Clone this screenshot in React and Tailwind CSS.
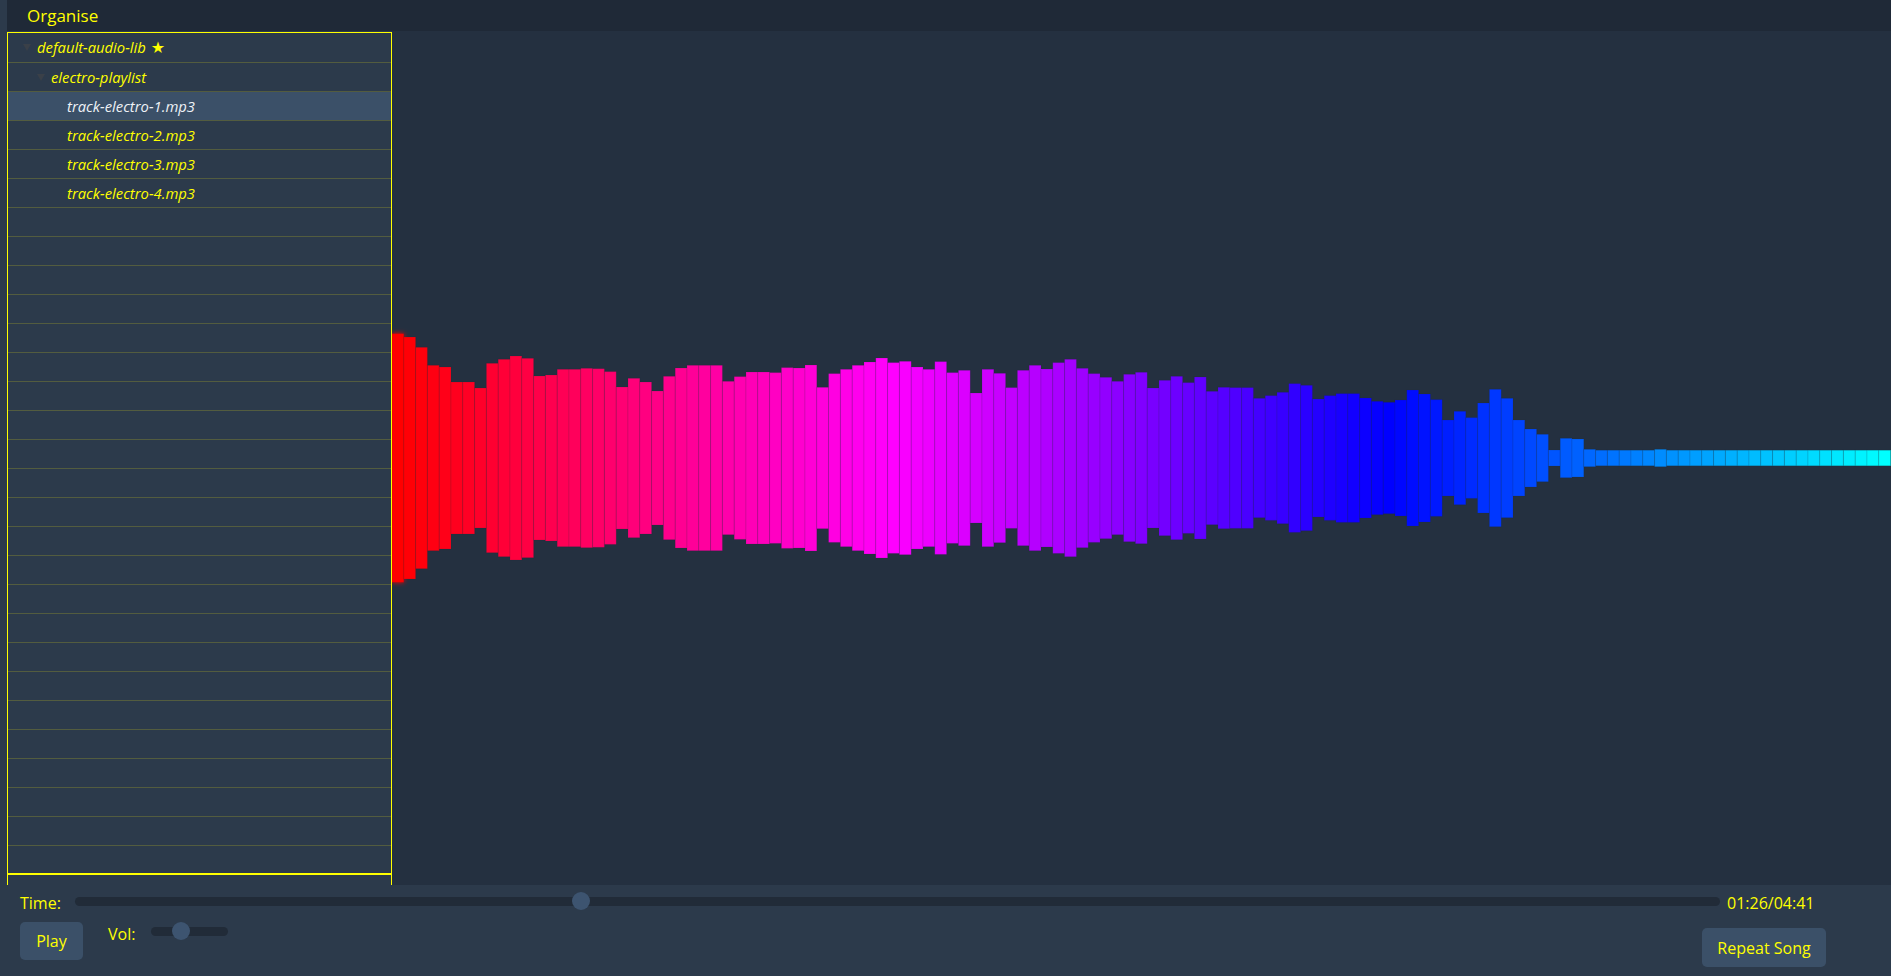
import React from "react";

const H = [
  124.4, 121, 110.7, 92.7, 91, 76, 76, 70, 94.7, 98.7, 102, 99.7, 82, 83, 88.7, 88.7,
  89.7, 89.3, 86.4, 71, 79.7, 76, 67, 81.7, 90, 92.7, 92.7, 92.7, 76.7, 81.4, 86, 86,
  85.4, 90.4, 90, 93, 70.7, 84.4, 88.7, 92.7, 96, 100, 95.4, 96.7, 91, 88.7, 96.4, 85.4,
  87.7, 65, 88.7, 84.7, 70.4, 87.7, 92.7, 89, 95.4, 98.7, 89.7, 84.4, 80.7, 76.7, 83.7, 85.7,
  70, 77.7, 81.7, 75.4, 81, 66.7, 70.7, 70.4, 70.4, 59.7, 62.4, 65.7, 74.4, 72.7, 59, 62.4,
  64.4, 64.4, 60, 56.7, 55.7, 58, 68, 64, 58.4, 38, 46.7, 40.4, 55, 68.7, 59.7, 38,
  29, 23.7, 8, 19.7, 19, 8.7,
];
const BARS = [];
for (let i = 0; i < 128; i++) {
  let h = i < H.length ? H[i] : i === 107 ? 8.7 : 7.8;
  BARS.push(h);
}
const BW = 11.8;
const CY = 427;

function Waveform() {
  return (
    <svg
      className="block w-full h-full"
      viewBox="0 0 1499 854"
      preserveAspectRatio="none"
    >
      <defs>
        <filter id="glow" x="-50%" y="-10%" width="200%" height="120%">
          <feGaussianBlur stdDeviation="2.5" />
        </filter>
      </defs>
      <rect
        x={0}
        y={CY - BARS[0]}
        width={BW}
        height={BARS[0] * 2}
        fill="#ff0000"
        filter="url(#glow)"
      />
      {BARS.map((h, i) => {
        const hue = 360 - (i * 60) / 42;
        return (
          <rect
            key={i}
            x={i * BW}
            y={CY - h}
            width={BW}
            height={h * 2}
            fill={`hsl(${hue}, 100%, 50%)`}
            stroke="rgba(30,40,60,0.14)"
            strokeWidth="1"
          />
        );
      })}
    </svg>
  );
}

function Caret() {
  return (
    <svg width="8" height="7" viewBox="0 0 8 7" className="block">
      <path d="M0 0 L8 0 L4 7 Z" fill="#3a4048" />
    </svg>
  );
}

const ROWS = [
  { level: 0, caret: true, text: "default-audio-lib", star: true },
  { level: 1, caret: true, text: "electro-playlist" },
  { level: 2, text: "track-electro-1.mp3", selected: true },
  { level: 2, text: "track-electro-2.mp3" },
  { level: 2, text: "track-electro-3.mp3" },
  { level: 2, text: "track-electro-4.mp3" },
];
while (ROWS.length < 29) ROWS.push({ empty: true });

const padByLevel = ["pl-[15px]", "pl-[29px]", "pl-[45px]"];

function Row({ row, index }) {
  const first = index === 0;
  const last = index === 28;
  const h = first ? "h-[30px]" : "h-[29px]";
  const border = last
    ? "border-b-2 border-[#ffff00]"
    : "border-b border-[#535c3f]";
  const bg = row.selected ? "bg-[#3b5068]" : "";
  if (row.empty) {
    return <div className={`${h} ${border} shrink-0`} />;
  }
  return (
    <div
      className={`${h} ${border} ${bg} ${padByLevel[row.level]} shrink-0 flex items-center`}
    >
      <div className="w-[14px] shrink-0 flex items-center">
        {row.caret ? <Caret /> : null}
      </div>
      <span
        className={`italic text-[14.8px] leading-none ${
          row.selected ? "text-[#eef2f6]" : "text-[#ffff00]"
        }`}
      >
        {row.text}
        {row.star ? (
          <span
            className="not-italic text-[16px] ml-[5px]"
            style={{ fontFamily: '"DejaVu Sans", sans-serif' }}
          >
            ★
          </span>
        ) : null}
      </span>
    </div>
  );
}

function Slider({ widthClass, thumbLeftClass }) {
  return (
    <div className={`relative ${widthClass} h-[9px] rounded-full bg-[#212b38]`}>
      <div
        className={`absolute ${thumbLeftClass} top-[-4.5px] w-[18px] h-[18px] rounded-full bg-[#3d5470]`}
      />
    </div>
  );
}

export default function App() {
  return (
    <div
      className="w-full h-[976px] bg-[#2c3a4b] flex flex-col overflow-hidden text-[#ffff00]"
      style={{ fontFamily: '"Open Sans", "Noto Sans", Arial, sans-serif' }}
    >
      <div className="flex-1 min-h-0 flex pl-[7px]">
        <div className="flex-1 min-w-0 flex flex-col">
          <div className="h-[31px] shrink-0 bg-[#1f2937] pl-[20px] flex items-center text-[17px]">
            Organise
          </div>
          <div className="flex-1 min-h-0 flex">
            <div className="w-[385px] shrink-0 pt-[1px] bg-[#2c3a4b] flex flex-col">
              <div className="flex-1 border-x border-t border-[#ffff00] flex flex-col overflow-hidden">
                {ROWS.map((r, i) => (
                  <Row key={i} row={r} index={i} />
                ))}
              </div>
            </div>
            <div className="flex-1 min-w-0 bg-[#243040]">
              <Waveform />
            </div>
          </div>
        </div>
      </div>
      <div className="h-[91px] shrink-0 bg-[#2c3a4b] pl-[20px] pr-[65px] flex flex-col">
        <div className="mt-[6px] h-[20px] flex items-center">
          <span className="w-[55px] text-[16px] leading-none pt-[4px]">Time:</span>
          <Slider widthClass="w-[1645px]" thumbLeftClass="left-[497px]" />
          <span className="ml-[7px] text-[16px] leading-none pt-[4px]">01:26/04:41</span>
        </div>
        <div className="mt-[11px] flex items-start">
          <button className="w-[63px] h-[38px] rounded-[5px] bg-[#3b5068] text-[16px] text-[#ffff00] flex items-center justify-center">
            Play
          </button>
          <div className="ml-[25px] h-[18px] flex items-center">
            <span className="w-[43px] text-[16px] leading-none pt-[5px]">Vol:</span>
            <Slider widthClass="w-[77px]" thumbLeftClass="left-[21px]" />
          </div>
          <button className="ml-auto mt-[6px] w-[124px] h-[39px] rounded-[5px] bg-[#3b5068] text-[16px] text-[#ffff00] flex items-center justify-center">
            Repeat Song
          </button>
        </div>
      </div>
    </div>
  );
}
